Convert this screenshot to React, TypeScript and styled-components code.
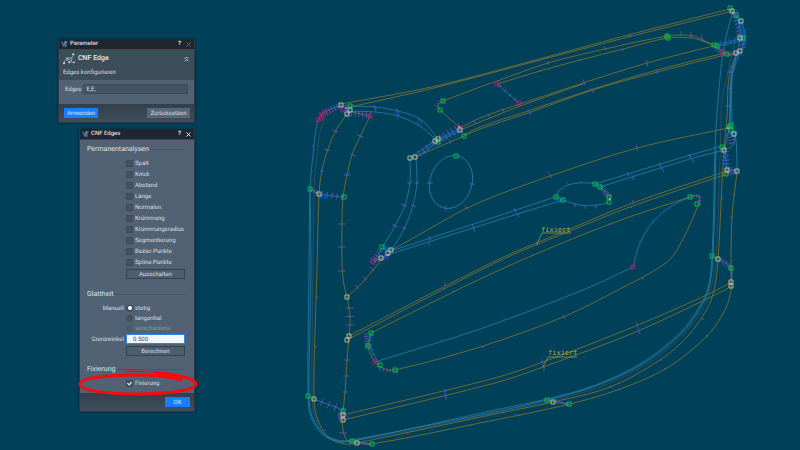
import React from "react";
import styled, { createGlobalStyle, css } from "styled-components";

const GlobalStyle = createGlobalStyle`
  *, *::before, *::after { box-sizing: border-box; }
  html, body { margin: 0; background: #004059; }
  body { font-family: Roboto, "Liberation Sans", sans-serif; font-size: 6px; line-height: 9px; color: #d8dfe5; overflow: hidden; text-rendering: geometricPrecision; }
  button, input { font: inherit; color: inherit; margin: 0; text-rendering: inherit; }
  h1, h2, p { margin: 0; font: inherit; }
`;

/* ---------- desktop and windows ---------- */

const Desktop = styled.main`
  position: relative;
  min-height: 100vh;
  background: #004059;
`;

const Scene = styled.svg`
  display: block;
  width: 100%;
  height: 100vh;
`;

const Windows = styled.div`
  position: absolute;
  top: 39px;
  left: 58px;
  display: flex;
  flex-direction: column;
  align-items: flex-end;
  gap: 6px;
`;

const Window = styled.section<{ $narrow?: boolean }>`
  position: relative;
  width: ${(p) => (p.$narrow ? 116 : 137)}px;
  border: 1px solid #2b3947;
  border-top: 0;
  background: #516274;
  box-shadow: 0 0 2px rgba(0, 16, 26, 0.5);
`;

const TitleBar = styled.header`
  display: flex;
  align-items: center;
  gap: 2px;
  height: 11px;
  padding: 0 2px;
  background: #1f2630;
  border-bottom: 1px solid #1f4c8a;
`;

const TitleText = styled.h1`
  flex: 1;
  font-weight: 500;
  line-height: 10px;
  color: #d9dee3;
`;

const TitleButton = styled.button<{ $dim?: boolean }>`
  display: grid;
  place-items: center;
  width: 7px;
  height: 10px;
  padding: 0;
  border: 0;
  background: none;
  font-weight: 700;
  line-height: 10px;
  color: ${(p) => (p.$dim ? "#5c6670" : "#e8ecef")};
`;

const Intro = styled.div`
  height: 30px;
  padding: 2px 5px 0 4px;
  background: #3e4d5a;
`;

const IntroHead = styled.div`
  display: flex;
  align-items: center;
  height: 13px;
  gap: 3px;
`;

const IntroTitle = styled.h2`
  flex: 1;
  font-size: 7px;
  font-weight: 500;
  color: #e3e8ec;
`;

const PlainButton = styled.button`
  display: grid;
  padding: 0;
  border: 0;
  background: none;
`;

const IntroText = styled.p`
  padding-top: 3px;
`;

const FieldRow = styled.div`
  display: flex;
  align-items: center;
  gap: 2px;
  height: 24px;
  padding: 0 6px 6px 6px;
`;

const TextField = styled.input<{ $active?: boolean }>`
  flex: 1;
  min-width: 0;
  height: 10px;
  padding: 0 2px;
  border: 1px solid #3e4c5a;
  border-radius: 0;
  background: #455463;
  outline: 0;
  ${(p) =>
    p.$active &&
    css`
      padding: 0 6px;
      border-color: #2d84ea;
      background: #f2f6fa;
      color: #3e4a55;
    `}
`;

const Footer = styled.footer<{ $end?: boolean }>`
  display: flex;
  align-items: center;
  justify-content: ${(p) => (p.$end ? "flex-end" : "space-between")};
  height: 18px;
  padding: 0 4px 0 5px;
  background: linear-gradient(#343f4b, #3f4d5a);
`;

const Button = styled.button<{ $kind?: "primary" | "plain"; $width?: number }>`
  width: ${(p) => (p.$width ? `${p.$width}px` : "100%")};
  height: 10px;
  padding: 0;
  border: 1px solid #36434f;
  background: #4e5e6f;
  line-height: 9px;
  text-align: center;
  ${(p) =>
    p.$kind === "primary" &&
    css`
      border-color: #1480ff;
      background: #1480ff;
      color: #d5e8ff;
    `}
  ${(p) =>
    p.$kind === "plain" &&
    css`
      border-color: #56677a;
      background: #56677a;
    `}
`;

const Body = styled.div`
  padding: 2px 9px 5px 7px;
`;

const Group = styled.fieldset<{ $gap?: number }>`
  min-width: 0;
  margin: 0 0 ${(p) => p.$gap ?? 0}px;
  padding: 0;
  border: 0;
`;

const Legend = styled.legend`
  display: flex;
  align-items: center;
  gap: 2px;
  width: 100%;
  height: 16px;
  padding: 0 0 1px;
  font-size: 7px;
  color: #dbe2e8;
  &::after {
    content: "";
    flex: 1;
    height: 1px;
    background: #46566a;
  }
`;

const Rows = styled.div<{ $pitch: number }>`
  display: grid;
  grid-template-columns: 37px 1fr;
  grid-auto-rows: ${(p) => p.$pitch}px;
  column-gap: 2px;
  align-items: center;
`;

const ButtonRow = styled.div`
  display: flex;
  padding: 1px 0 1px 39px;
`;

const Caption = styled.span`
  grid-column: 1;
  text-align: right;
`;

const CaptionLabel = styled(Caption).attrs({ as: "label" })<{ htmlFor?: string }>``;

const Cell = styled.div`
  grid-column: 2;
  display: flex;
`;

const Option = styled.label<{ $muted?: boolean }>`
  grid-column: 2;
  display: flex;
  align-items: center;
  gap: 2px;
  color: ${(p) => (p.$muted ? "#8e9ba7" : "inherit")};
`;

const Tick = styled.input`
  appearance: none;
  position: relative;
  width: 7px;
  height: 7px;
  background: #445261;
  border: 1px solid #3d4a58;
  &:checked::after {
    content: "";
    position: absolute;
    left: 1px;
    top: 0;
    width: 3px;
    height: 4px;
    border: solid #ffffff;
    border-width: 0 1px 1px 0;
    transform: rotate(40deg);
  }
`;

const Radio = styled.input`
  appearance: none;
  display: grid;
  place-items: center;
  width: 7px;
  height: 7px;
  border-radius: 50%;
  background: #435160;
  border: 1px solid #3d4b59;
  &:checked::after {
    content: "";
    width: 4px;
    height: 4px;
    border-radius: 50%;
    background: #ffffff;
  }
  &:disabled {
    background: #4c5c6d;
    border-color: #495969;
  }
`;

/* ---------- icons ---------- */

const AppIcon = () => (
  <svg width="7" height="7" viewBox="0 0 14 14" aria-hidden="true">
    <path d="M0 1.5 3 1.5 6 8.5 6 13z" fill="#1c86f2" />
    <path d="M5 6.5 7.5 3 7.5 7 6 12z" fill="#3e9bff" />
    <path d="M6 1 13 1 13 3.2 10.6 3.2 10.6 11 8.6 13 8.6 3.2 6 3.2z" fill="#8aa0b4" />
  </svg>
);

const EdgeIcon = () => (
  <svg width="12" height="12" viewBox="0 0 36 36" fill="none" stroke="#c5cdd3" strokeWidth="1.8" aria-hidden="true">
    <path d="M3 30C5 20 12 14 20 15S28 12 31 4" />
    <path d="M11 24C16 17 22 17 24 22S28 30 34 28" />
    <path d="M12 16 20 27M27 13 25 28" strokeWidth="1.4" />
    <g fill="#dbe1e5" stroke="none">
      <circle cx="3" cy="31" r="3" />
      <circle cx="12" cy="16" r="2.4" />
      <circle cx="19" cy="28" r="3" />
      <circle cx="31" cy="4" r="3" />
      <circle cx="33" cy="28" r="2.6" />
    </g>
  </svg>
);

const CollapseIcon = () => (
  <svg width="5" height="6" viewBox="0 0 10 12" fill="none" stroke="#d5dce1" strokeWidth="1.8" aria-hidden="true">
    <path d="M1.5 5.5 5 2 8.5 5.5M1.5 10.5 5 7 8.5 10.5" />
  </svg>
);

const CloseIcon = () => (
  <svg width="5" height="5" viewBox="0 0 10 10" fill="none" stroke="currentColor" strokeWidth="2" aria-hidden="true">
    <path d="M1 1 9 9M9 1 1 9" />
  </svg>
);

const Marker = styled.svg`
  position: absolute;
  left: -4px;
  bottom: 15px;
  width: 124px;
  height: 28px;
  pointer-events: none;
`;

/* ---------- edge model ---------- */

type Pt = [number, number];

const curve = (p: Pt[]): string => {
  let d = `M${p[0][0]} ${p[0][1]}`;
  for (let i = 0; i < p.length - 1; i++) {
    const a = p[i - 1] ?? p[i];
    const b = p[i];
    const c = p[i + 1];
    const e = p[i + 2] ?? c;
    const len = Math.hypot(c[0] - b[0], c[1] - b[1]);
    const la = Math.hypot(c[0] - a[0], c[1] - a[1]) || 1;
    const lb = Math.hypot(e[0] - b[0], e[1] - b[1]) || 1;
    const k = len / 3;
    d += `C${(b[0] + ((c[0] - a[0]) / la) * k).toFixed(2)} ${(b[1] + ((c[1] - a[1]) / la) * k).toFixed(2)} ${(
      c[0] - ((e[0] - b[0]) / lb) * k
    ).toFixed(2)} ${(c[1] - ((e[1] - b[1]) / lb) * k).toFixed(2)} ${c[0]} ${c[1]}`;
  }
  return d;
};

const gold: Pt[][] = [
  [[347, 114], [336, 130], [328, 149], [322, 170], [319, 194], [317, 270], [316, 297], [314, 400], [318, 420], [328, 437], [345, 444], [357, 443], [495, 414], [553, 402], [610, 387], [660, 360], [687, 337], [707, 309], [714, 290], [718, 260], [722, 183], [724, 150], [727, 117], [729, 77], [737, 52]],
  [[737, 172], [732, 217], [731, 267], [731, 290], [725, 310], [707, 336], [667, 368], [620, 389], [570, 404], [480, 423], [372, 444], [357, 443]],
  [[352, 112], [370, 116]],
  [[370, 116], [360, 137], [352, 155], [347, 175], [343, 198], [342, 223], [342, 265], [344, 285], [347, 297], [350, 317], [349, 337], [347, 360], [345, 393], [343, 413], [343, 430], [348, 441], [357, 443]],
  [[347, 297], [362, 283], [383, 258]],
  [[349, 336], [495, 261], [570, 229], [630, 204], [727, 171]],
  [[347, 340], [495, 263], [570, 231], [630, 207], [727, 174]],
  [[371, 333], [495, 272], [610, 224], [690, 197]],
  [[690, 197], [698, 196], [699, 203], [677, 250], [663, 265], [618, 290], [563, 317], [480, 347], [395, 370], [385, 369], [375, 362], [368, 346], [371, 333]],
  [[343, 415], [495, 378], [543, 362], [638, 325], [713, 292], [731, 282]],
  [[343, 420], [495, 383], [543, 367], [638, 331], [725, 290], [731, 286]],
  [[341, 104], [422, 89], [480, 75], [628, 35], [730, 9]],
  [[350, 107], [422, 91], [480, 76], [628, 37], [733, 11]],
  [[497, 84], [540, 71], [580, 60], [623, 49], [668, 38], [692, 38], [703, 41], [715, 46]],
  [[443, 101], [480, 87], [497, 81], [548, 63], [605, 49], [667, 36], [682, 35], [694, 36], [703, 40], [715, 46], [727, 54], [737, 53]],
  [[443, 101], [438, 105], [440, 110]],
  [[440, 110], [460, 128]],
  [[460, 128], [480, 118], [523, 103], [583, 83], [647, 63], [713, 46]],
  [[460, 130], [480, 122], [523, 105], [583, 84]],
  [[464, 135], [480, 127], [528, 111], [593, 89], [657, 70], [725, 53]],
  [[415, 157], [464, 136], [480, 129], [528, 113], [593, 90], [657, 72], [725, 55]],
  [[392, 250], [445, 220], [467, 208], [495, 196], [550, 176], [637, 148], [728, 128]],
  [[727, 170], [737, 170]],
];

const blue: Pt[][] = [
  [[341, 105], [325, 112], [318, 120], [313, 155], [310, 190], [309, 270], [308, 396], [311, 417], [322, 434], [337, 441], [352, 441], [495, 410], [547, 399], [593, 386], [640, 364], [680, 333], [700, 306], [708, 288], [712, 257], [715, 150], [717, 113], [722, 60], [727, 33], [733, 12]],
  [[310, 190], [311, 270], [309, 396], [312, 416], [323, 433], [337, 440], [352, 440], [495, 412], [547, 400], [593, 387], [641, 365], [681, 334], [701, 307], [709, 288], [713, 257], [716, 150]],
  [[341, 105], [350, 106], [375, 107], [398, 111], [420, 119], [432, 131], [438, 140]],
  [[345, 110], [350, 111], [375, 112], [398, 116], [420, 126], [432, 136], [437, 142]],
  [[462, 128], [437, 140], [410, 158]],
  [[462, 130], [438, 142], [416, 158]],
  [[410, 158], [410, 182], [405, 205], [395, 226], [382, 248], [374, 261]],
  [[374, 261], [381, 258], [388, 254], [392, 250]],
  [[416, 158], [417, 182], [413, 205], [405, 227], [392, 250]],
  [[392, 250], [382, 248]],
  [[391, 251], [495, 217], [555, 197]],
  [[384, 256], [495, 221], [563, 200]],
  [[595, 184], [677, 159], [722, 146]],
  [[600, 187], [693, 158], [724, 150], [733, 145], [735, 134]],
  [[556, 197], [559, 191], [568, 185], [580, 183], [595, 184], [602, 189], [610, 197], [608, 202], [597, 205], [580, 205], [563, 200], [556, 197]],
  [[375, 362], [480, 329], [583, 290], [633, 267]],
  [[633, 267], [640, 243], [653, 222], [670, 207], [690, 197]],
  [[371, 333], [370, 346], [380, 365]],
  [[497, 84], [519, 103]],
  [[310, 189], [319, 194], [344, 197]],
  [[308, 396], [314, 399], [343, 410]],
  [[352, 441], [372, 444]],
  [[547, 400], [569, 404]],
  [[712, 256], [718, 259], [731, 268], [731, 286]],
  [[733, 12], [741, 21], [745, 38], [740, 52], [732, 77], [730, 127]],
  [[730, 9], [738, 20], [740, 38], [736, 55], [731, 77], [729, 127], [725, 150], [727, 171]],
  [[732, 125], [732, 77], [737, 53]],
  [[715, 45], [744, 38]],
  [[715, 47], [741, 41]],
  [[730, 127], [735, 134], [737, 160], [737, 172]],
];

const dim: Pt[][] = [
  [[341, 106], [324, 120], [317, 155], [314, 195], [313, 270], [312, 396], [315, 417], [326, 436], [345, 442], [495, 413], [550, 401], [600, 387], [648, 363], [684, 334], [704, 307], [711, 288], [716, 257], [720, 160], [722, 100], [727, 77], [737, 33]],
];

/* tick rows: start, end, number of ticks, half length */
type TickRow = [number, number, number, number, number, number];

const violetRows: TickRow[] = [
  [321, 115, 340, 105, 8, 3],
  [348, 113, 370, 115, 7, 3],
  [322, 194, 342, 197, 5, 3],
  [310, 189, 318, 193, 5, 2],
  [372, 263, 380, 251, 6, 3],
  [375, 261, 388, 256, 7, 2],
  [419, 153, 436, 141, 5, 3],
  [441, 138, 460, 127, 6, 4],
  [436, 106, 442, 100, 4, 2],
  [500, 86, 520, 104, 5, 2],
  [322, 402, 342, 410, 4, 4],
  [341, 413, 341, 419, 5, 3],
  [358, 443, 370, 444, 8, 1],
  [554, 402, 568, 404, 9, 1],
  [366, 334, 367, 346, 6, 2],
  [380, 369, 397, 372, 6, 2],
  [602, 188, 609, 197, 7, 3],
  [721, 260, 730, 267, 5, 3],
  [731, 268, 731, 286, 9, 1],
  [727, 172, 737, 172, 6, 3],
  [736, 17, 743, 48, 10, 3],
  [717, 48, 725, 54, 6, 3],
  [728, 55, 739, 52, 6, 2],
  [730, 134, 732, 143, 4, 3],
  [726, 154, 727, 170, 6, 2],
  [691, 196, 699, 196, 4, 2],
  [700, 197, 699, 204, 3, 2],
  [350, 308, 350, 325, 3, 4],
  [357, 287, 372, 269, 3, 3],
];

const blueRows: TickRow[] = [
  [343, 108, 351, 115, 6, 4],
  [320, 196, 327, 196, 4, 3],
  [383, 248, 391, 250, 6, 3],
  [384, 257, 392, 250, 5, 3],
  [420, 154, 438, 141, 6, 3],
  [443, 138, 461, 130, 6, 4],
  [370, 336, 374, 359, 6, 2],
  [342, 412, 347, 418, 4, 3],
  [595, 184, 602, 187, 5, 2],
  [557, 199, 563, 200, 4, 3],
  [735, 11, 744, 42, 14, 3],
  [744, 30, 744, 46, 7, 2],
  [717, 44, 743, 38, 7, 3],
  [741, 54, 731, 67, 4, 3],
  [730, 126, 735, 134, 6, 4],
  [725, 152, 727, 168, 5, 4],
  [728, 169, 737, 171, 4, 3],
];

const rowPath = (rows: TickRow[]) =>
  rows
    .map(([x1, y1, x2, y2, n, h]) => {
      const l = Math.hypot(x2 - x1, y2 - y1);
      const nx = (-(y2 - y1) / l) * h;
      const ny = ((x2 - x1) / l) * h;
      return Array.from({ length: n }, (_, i) => {
        const t = n > 1 ? i / (n - 1) : 0;
        const x = x1 + (x2 - x1) * t;
        const y = y1 + (y2 - y1) * t;
        return `M${(x - nx).toFixed(1)} ${(y - ny).toFixed(1)}L${(x + nx).toFixed(1)} ${(y + ny).toFixed(1)}`;
      }).join("");
    })
    .join("");

/* single ticks: x, y, dx, dy (half vector) */
type Mark = [number, number, number, number];

const violetMarks: Mark[] = [
  [335, 131, 3, 1], [327, 150, 3, 1], [322, 171, 2, 0], [360, 136, 3, 1], [353, 155, 3, 1], [347, 175, 3, 0],
  [342, 224, 4, 0], [342, 247, 4, 0], [342, 271, 4, 0], [347, 360, 3, 0], [346, 376, 3, 0], [345, 392, 3, 0],
  [343, 433, 4, 0], [313, 146, 1, 0], [312, 171, 1, 0], [317, 297, 1, 1], [316, 347, 1, 1],
  [375, 108, 1, 3], [398, 112, 1, 4], [420, 121, 2, 3], [409, 183, 2, 0], [417, 183, 2, 0], [404, 205, 3, 1],
  [414, 206, 2, 1], [395, 226, 3, 1], [404, 228, 2, 1], [430, 183, 3, 0], [472, 184, 3, 0], [446, 208, 0, 3],
  [467, 208, 2, 2], [430, 238, 1, 2], [429, 244, 1, 2], [473, 226, 1, 2], [474, 230, 1, 2],
  [450, 142, 1, 2], [475, 122, 1, 2], [489, 116, 1, 2], [503, 110, 1, 2], [530, 113, 1, 2], [593, 91, 1, 2], [657, 72, 1, 2],
  [584, 82, 1, 3], [647, 63, 1, 3], [548, 63, 0, 2], [605, 48, 1, 2], [540, 71, 1, 1], [580, 60, 1, 0], [623, 50, 1, 1],
  [532, 62, 1, 0], [630, 36, 2, 1], [681, 33, 0, 2], [691, 35, 0, 3], [702, 38, 1, 3], [667, 35, 1, 2],
  [550, 175, 2, 3], [637, 148, 1, 3], [558, 191, 1, 1], [515, 210, 1, 2], [518, 215, 1, 2], [568, 184, 1, 1],
  [581, 182, 0, 1], [575, 205, 0, 2], [585, 207, 0, 2], [596, 207, 0, 2], [628, 174, 1, 2], [633, 178, 0, 2],
  [660, 165, 1, 2], [663, 170, 1, 2], [690, 156, 1, 2], [693, 161, 1, 2], [633, 202, 0, 2], [631, 207, 1, 1],
  [610, 224, 1, 1], [532, 255, 1, 1], [537, 244, 0, 2], [643, 279, 1, 1], [445, 284, 0, 2], [443, 289, 0, 1], [453, 291, 1, 1],
  [483, 347, 0, 1], [564, 317, 1, 2], [445, 391, 0, 2], [446, 397, 0, 3], [542, 361, 1, 2], [544, 369, 0, 2],
  [637, 324, 1, 2], [639, 332, 1, 2], [665, 369, 1, 1], [619, 390, 1, 1], [661, 360, 1, 1], [610, 387, 1, 1],
  [707, 336, 1, 1], [703, 319, 1, 1], [519, 415, 1, 0], [504, 413, 1, 0], [471, 425, 1, 0], [408, 433, 1, 0],
  [318, 421, 1, 0], [325, 430, 1, 0], [722, 199, 1, 0], [732, 217, 1, 0], [731, 240, 1, 0], [734, 195, 1, 0],
  [730, 72, 3, 0], [729, 88, 2, 0], [728, 106, 3, 0],
];

const blueMarks: Mark[] = [
  [337, 131, 1, 1], [322, 169, 0, 2], [362, 137, 2, 0], [348, 174, 2, 0], [376, 110, 0, 2], [397, 115, 1, 4], [418, 124, 1, 3],
  [411, 182, 2, 0], [418, 182, 1, 0], [405, 206, 1, 1], [412, 206, 1, 1], [395, 225, 1, 1], [429, 239, 0, 2],
  [474, 228, 1, 1], [517, 213, 2, 2], [632, 175, 1, 2], [661, 168, 2, 2], [691, 158, 2, 2], [640, 242, 1, 1],
  [653, 222, 0, 2], [670, 208, 1, 1], [568, 295, 0, 1], [504, 319, 0, 1], [441, 340, 0, 1], [445, 394, 0, 4],
  [543, 365, 1, 3], [638, 328, 1, 3], [584, 84, 0, 2], [647, 66, 0, 1], [592, 89, 1, 1], [528, 111, 0, 2],
  [732, 71, 3, 0], [731, 88, 2, 0], [730, 105, 2, 0],
];

const markPath = (marks: Mark[]) =>
  marks.map(([x, y, dx, dy]) => `M${x - dx} ${y - dy}L${x + dx} ${y + dy}`).join("");

const nodes: { color: string; at: Pt[] }[] = [
  {
    color: "#c21466",
    at: [[318, 120], [321, 118], [325, 112], [322, 115], [343, 109], [370, 116], [373, 261], [497, 84], [519, 103], [460, 128], [375, 362], [633, 267], [723, 53]],
  },
  {
    color: "#08c83c",
    at: [[350, 106], [310, 189], [344, 197], [382, 247], [438, 142], [464, 136], [443, 101], [440, 110], [456, 156], [371, 333], [368, 346], [380, 365], [395, 370], [308, 396], [343, 411], [352, 441], [372, 444], [547, 400], [569, 404], [556, 197], [563, 200], [595, 184], [600, 187], [609, 197], [609, 202], [690, 197], [697, 204], [712, 256], [731, 268], [726, 174], [722, 147], [667, 36], [668, 38], [714, 45], [717, 46], [727, 54], [730, 8], [736, 15], [743, 38], [729, 127], [731, 125], [731, 130]],
  },
  {
    color: "#c6c292",
    at: [[341, 105], [347, 114], [350, 110], [319, 194], [410, 158], [415, 157], [435, 141], [438, 139], [460, 130], [391, 250], [388, 253], [381, 258], [347, 297], [349, 336], [347, 340], [314, 399], [343, 415], [343, 420], [357, 443], [553, 402], [718, 259], [731, 282], [731, 286], [727, 170], [737, 171], [724, 150], [734, 134], [732, 11], [741, 21], [740, 38], [740, 51], [736, 53]],
  },
];

const Lines = ({ set, color, opacity = 1 }: { set: Pt[][]; color: string; opacity?: number }) => (
  <path d={set.map(curve).join("")} stroke={color} opacity={opacity} />
);

const EdgeModel = () => (
  <Scene viewBox="0 0 800 450" fill="none" strokeWidth="0.8" role="img" aria-label="CNF Edges">
    <Lines set={dim} color="#4d5560" opacity={0.75} />
    <Lines set={gold} color="#81752f" />
    <Lines set={blue} color="#2580ac" />
    <ellipse cx="451" cy="182" rx="21" ry="27" transform="rotate(18 451 182)" stroke="#2580ac" />
    <path d={rowPath(violetRows) + markPath(violetMarks)} stroke="#8750c4" strokeWidth="0.7" />
    <path d={rowPath(blueRows) + markPath(blueMarks)} stroke="#1263df" strokeWidth="0.7" />
    {nodes.map(({ color, at }) => (
      <path key={color} d={at.map(([x, y]) => `M${x - 2} ${y - 2}h4v4h-4z`).join("")} stroke={color} strokeWidth="0.9" />
    ))}
    <g fill="#ef8bb4">
      {[[346, 108], [349, 113], [459, 127], [388, 255], [344, 417], [348, 338], [731, 284], [733, 13], [728, 172], [738, 52], [728, 128], [610, 199]].map(
        ([x, y]) => (
          <circle key={`${x}-${y}`} cx={x} cy={y} r="1" />
        ),
      )}
    </g>
    <path d="M537 244 542 233H571M543 367 548 357H577" stroke="#959741" />
    <g fill="#b0ab3c" fontFamily='"DejaVu Sans Mono", "Liberation Mono", monospace' fontSize="7">
      <text x="541" y="232">fixiert</text>
      <text x="548" y="355">fixiert</text>
    </g>
  </Scene>
);

/* ---------- page ---------- */

const analyses = ["Spalt", "Knick", "Abstand", "Länge", "Normalen", "Krümmung", "Krümmungsradius", "Segmentierung", "Bezier-Punkte", "Spline-Punkte"];

const WindowTitle = ({ title, dimClose }: { title: string; dimClose?: boolean }) => (
  <TitleBar>
    <AppIcon />
    <TitleText>{title}</TitleText>
    <TitleButton type="button">?</TitleButton>
    <TitleButton type="button" aria-label="Schließen" $dim={dimClose}>
      <CloseIcon />
    </TitleButton>
  </TitleBar>
);

export default function App() {
  return (
    <Desktop>
      <GlobalStyle />
      <EdgeModel />
      <Windows>
        <Window>
          <WindowTitle title="Parameter" dimClose />
          <Intro>
            <IntroHead>
              <EdgeIcon />
              <IntroTitle>CNF Edge</IntroTitle>
              <PlainButton type="button" aria-label="Einklappen">
                <CollapseIcon />
              </PlainButton>
            </IntroHead>
            <IntroText>Edges konfigurieren</IntroText>
          </Intro>
          <FieldRow>
            <label htmlFor="edges">Edges</label>
            <TextField id="edges" defaultValue="E,E," />
          </FieldRow>
          <Footer>
            <Button type="button" $kind="primary" $width={34}>
              Anwenden
            </Button>
            <Button type="button" $kind="plain" $width={43}>
              Zurücksetzen
            </Button>
          </Footer>
        </Window>

        <Window $narrow>
          <WindowTitle title="CNF Edges" />
          <Body>
            <Group $gap={7}>
              <Legend>Permanentanalysen</Legend>
              <Rows $pitch={11}>
                {analyses.map((name) => (
                  <Option key={name}>
                    <Tick type="checkbox" />
                    {name}
                  </Option>
                ))}
              </Rows>
              <ButtonRow>
                <Button type="button">Ausschalten</Button>
              </ButtonRow>
            </Group>
            <Group $gap={5}>
              <Legend>Glattheit</Legend>
              <Rows $pitch={10}>
                <Caption>Manuell</Caption>
                <Option>
                  <Radio type="radio" name="mode" defaultChecked />
                  stetig
                </Option>
                <Option>
                  <Radio type="radio" name="mode" />
                  tangential
                </Option>
                <Option $muted>
                  <Radio type="radio" name="mode" disabled />
                  verschiedene
                </Option>
              </Rows>
              <Rows $pitch={12}>
                <CaptionLabel htmlFor="angle">Grenzwinkel</CaptionLabel>
                <TextField id="angle" $active defaultValue="0.500" />
                <Cell>
                  <Button type="button">Berechnen</Button>
                </Cell>
              </Rows>
            </Group>
            <Group>
              <Legend>Fixierung</Legend>
              <Rows $pitch={10}>
                <Option>
                  <Tick type="checkbox" defaultChecked />
                  Fixierung
                </Option>
              </Rows>
            </Group>
          </Body>
          <Footer $end>
            <Button type="button" $kind="primary" $width={25}>
              OK
            </Button>
          </Footer>
          <Marker viewBox="0 0 124 28" fill="none" stroke="#fa0a0a" strokeLinecap="round" aria-hidden="true">
            <path d="M50 3C72 3 96 5 110 9" strokeWidth="1.4" />
            <path d="M80 5C104 7 120 11 120 16C120 22 92 26 62 26C32 26 4 23 4 16C4 10 32 7 58 7C78 7 97 9 105 12" strokeWidth="3" />
          </Marker>
        </Window>
      </Windows>
    </Desktop>
  );
}
